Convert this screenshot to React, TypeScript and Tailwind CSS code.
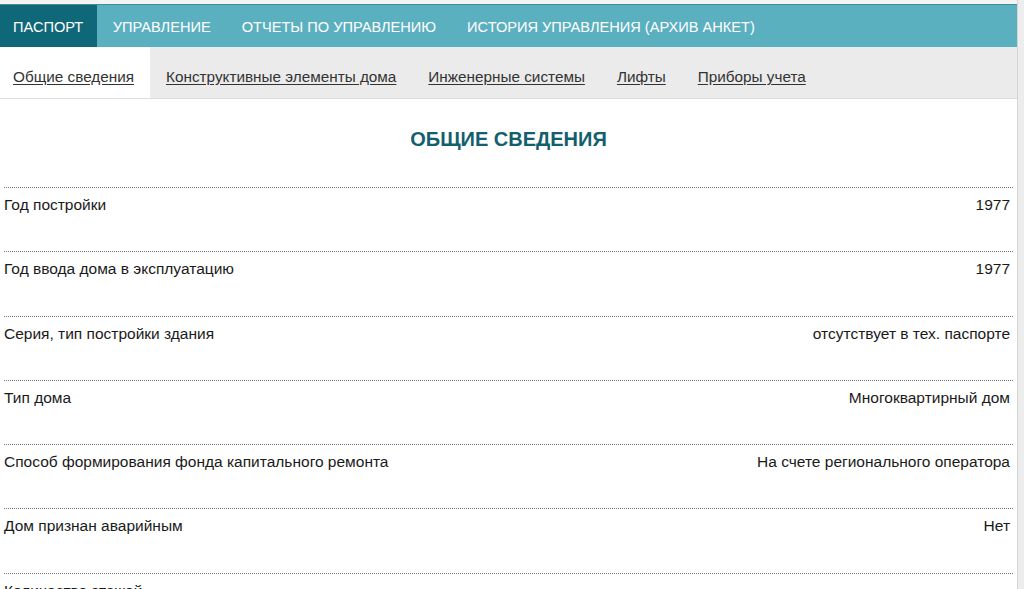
import React from 'react';

const mainTabs = ['ПАСПОРТ', 'УПРАВЛЕНИЕ', 'ОТЧЕТЫ ПО УПРАВЛЕНИЮ', 'ИСТОРИЯ УПРАВЛЕНИЯ (АРХИВ АНКЕТ)'];
const subTabs = ['Общие сведения', 'Конструктивные элементы дома', 'Инженерные системы', 'Лифты', 'Приборы учета'];

const rows: [string, string][] = [
  ['Год постройки', '1977'],
  ['Год ввода дома в эксплуатацию', '1977'],
  ['Серия, тип постройки здания', 'отсутствует в тех. паспорте'],
  ['Тип дома', 'Многоквартирный дом'],
  ['Способ формирования фонда капитального ремонта', 'На счете регионального оператора'],
  ['Дом признан аварийным', 'Нет'],
  ['Количество этажей', ''],
];

export default function App() {
  return (
    <div
      className="h-[589px] w-[1024px] overflow-hidden bg-[#ededed] text-[#1a1a1a]"
      style={{ fontFamily: '"Liberation Sans", Arial, sans-serif' }}
    >
      <div className="flex h-full">
        <div className="flex w-[1018px] shrink-0 flex-col border-r border-[#d4d4d4] bg-white">
          {/* top nav */}
          <div className="h-[4px] shrink-0 bg-[#f4f4f4]" />
          <div className="flex h-[43px] shrink-0 border-t border-[#3f8e9c] bg-[#5bb0bf] text-[14.6px] text-white">
            {mainTabs.map((t, i) => (
              <div
                key={t}
                className={`flex items-center px-[15.5px] pt-[3px] ${i === 0 ? 'bg-[#0e6878] pl-[13px] pr-[14px]' : ''}`}
              >
                {t}
              </div>
            ))}
          </div>

          {/* sub tabs */}
          <div className="flex h-[52px] shrink-0 border-b border-[#dcdcdc] bg-[#ebebeb] text-[15.3px] text-[#333]">
            {subTabs.map((t, i) => (
              <div
                key={t}
                className={`flex items-center px-[16px] pt-[10px] ${i === 0 ? 'bg-white pl-[13px]' : ''}`}
              >
                <span className="underline underline-offset-2">{t}</span>
              </div>
            ))}
          </div>

          {/* content */}
          <div className="flex-1 px-[4px]">
            <h2 className="flex h-[88px] items-center justify-center pb-[8px] text-[20px] font-bold text-[#135f6e]">
              ОБЩИЕ СВЕДЕНИЯ
            </h2>
            {rows.map(([label, value]) => (
              <div
                key={label}
                className="flex h-[64.3px] shrink-0 justify-between border-t border-dotted border-[#777] pr-[3px] pt-[5px] text-[15.5px]"
              >
                <span>{label}</span>
                <span>{value}</span>
              </div>
            ))}
          </div>
        </div>
      </div>
    </div>
  );
}
